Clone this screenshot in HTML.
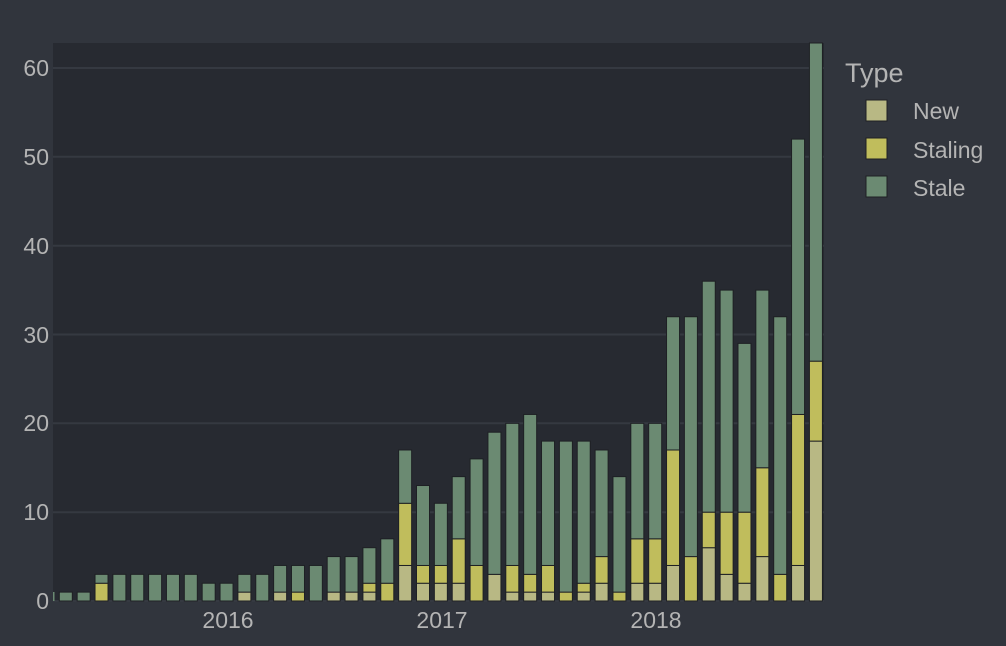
<!DOCTYPE html>
<html><head><meta charset="utf-8"><style>
html,body{margin:0;padding:0;background:#31353d;}
svg{display:block;font-family:"Liberation Sans",sans-serif;}
</style></head><body>
<svg id="c" width="1006" height="646" xmlns="http://www.w3.org/2000/svg">
<rect width="1006" height="646" fill="#31353d"/>
<rect x="53" y="43" width="771" height="558" fill="#272a31"/>
<g stroke="#353941" stroke-width="2">
<line x1="53" x2="824" y1="601" y2="601"/>
<line x1="53" x2="824" y1="512.2" y2="512.2"/>
<line x1="53" x2="824" y1="423.3" y2="423.3"/>
<line x1="53" x2="824" y1="334.5" y2="334.5"/>
<line x1="53" x2="824" y1="245.7" y2="245.7"/>
<line x1="53" x2="824" y1="156.8" y2="156.8"/>
<line x1="53" x2="824" y1="68" y2="68"/>
</g>
<g fill="#b4b4b4" font-size="23" text-anchor="end">
<text x="49" y="609">0</text>
<text x="49" y="520">10</text>
<text x="49" y="431">20</text>
<text x="49" y="343">30</text>
<text x="49" y="254">40</text>
<text x="49" y="165">50</text>
<text x="49" y="76">60</text>
</g>
<g fill="#b4b4b4" font-size="23" text-anchor="middle">
<text x="228" y="628">2016</text>
<text x="442" y="628">2017</text>
<text x="656" y="628">2018</text>
</g>
<g id="bars"></g>
<text x="845" y="82" fill="#b4b4b4" font-size="27">Type</text>
<g stroke="#1e2024" stroke-width="1">
<rect x="866" y="100" width="21" height="21" fill="#b8b884"/>
<rect x="866" y="138" width="21" height="21" fill="#c0bd5c"/>
<rect x="866" y="176" width="21" height="21" fill="#6b8a72"/>
</g>
<g fill="#b4b4b4" font-size="23">
<text x="913" y="119">New</text>
<text x="913" y="158">Staling</text>
<text x="913" y="196">Stale</text>
</g>
</svg>
<script>
var d=[[0,0,1],[0,0,1],[0,2,3],[0,0,3],[0,0,3],[0,0,3],[0,0,3],[0,0,3],[0,0,2],[0,0,2],[1,1,3],[0,0,3],[1,1,4],[0,1,4],[0,0,4],[1,1,5],[1,1,5],[1,2,6],[0,2,7],[4,11,17],[2,4,13],[2,4,11],[2,7,14],[0,4,16],[3,3,19],[1,4,20],[1,3,21],[1,4,18],[0,1,18],[1,2,18],[2,5,17],[0,1,14],[2,7,20],[2,7,20],[4,17,32],[0,5,32],[6,10,36],[3,10,35],[2,10,29],[5,15,35],[0,3,32],[4,21,52],[18,27,63]];
var g=document.getElementById('bars'),h='';
function Y(v){var y=601-8.883*v;return y<43?43:y;}
function r(x,a,b,c){if(b<=a)return '';var y1=Y(b),y2=Y(a);return '<rect x="'+x+'" y="'+y1+'" width="13" height="'+(y2-y1)+'" fill="'+c+'" stroke="#1e2024" stroke-width="1"/>';}
for(var i=0;i<d.length;i++){var x=59.3+17.86*i,e=d[i];
h+=r(x,0,e[0],'#b8b884')+r(x,e[0],e[1],'#c0bd5c')+r(x,e[1],e[2],'#6b8a72');}
h+='<rect x="53" y="592" width="1.5" height="9" fill="#6b8a72"/>';
g.innerHTML=h;
</script>
</body></html>
